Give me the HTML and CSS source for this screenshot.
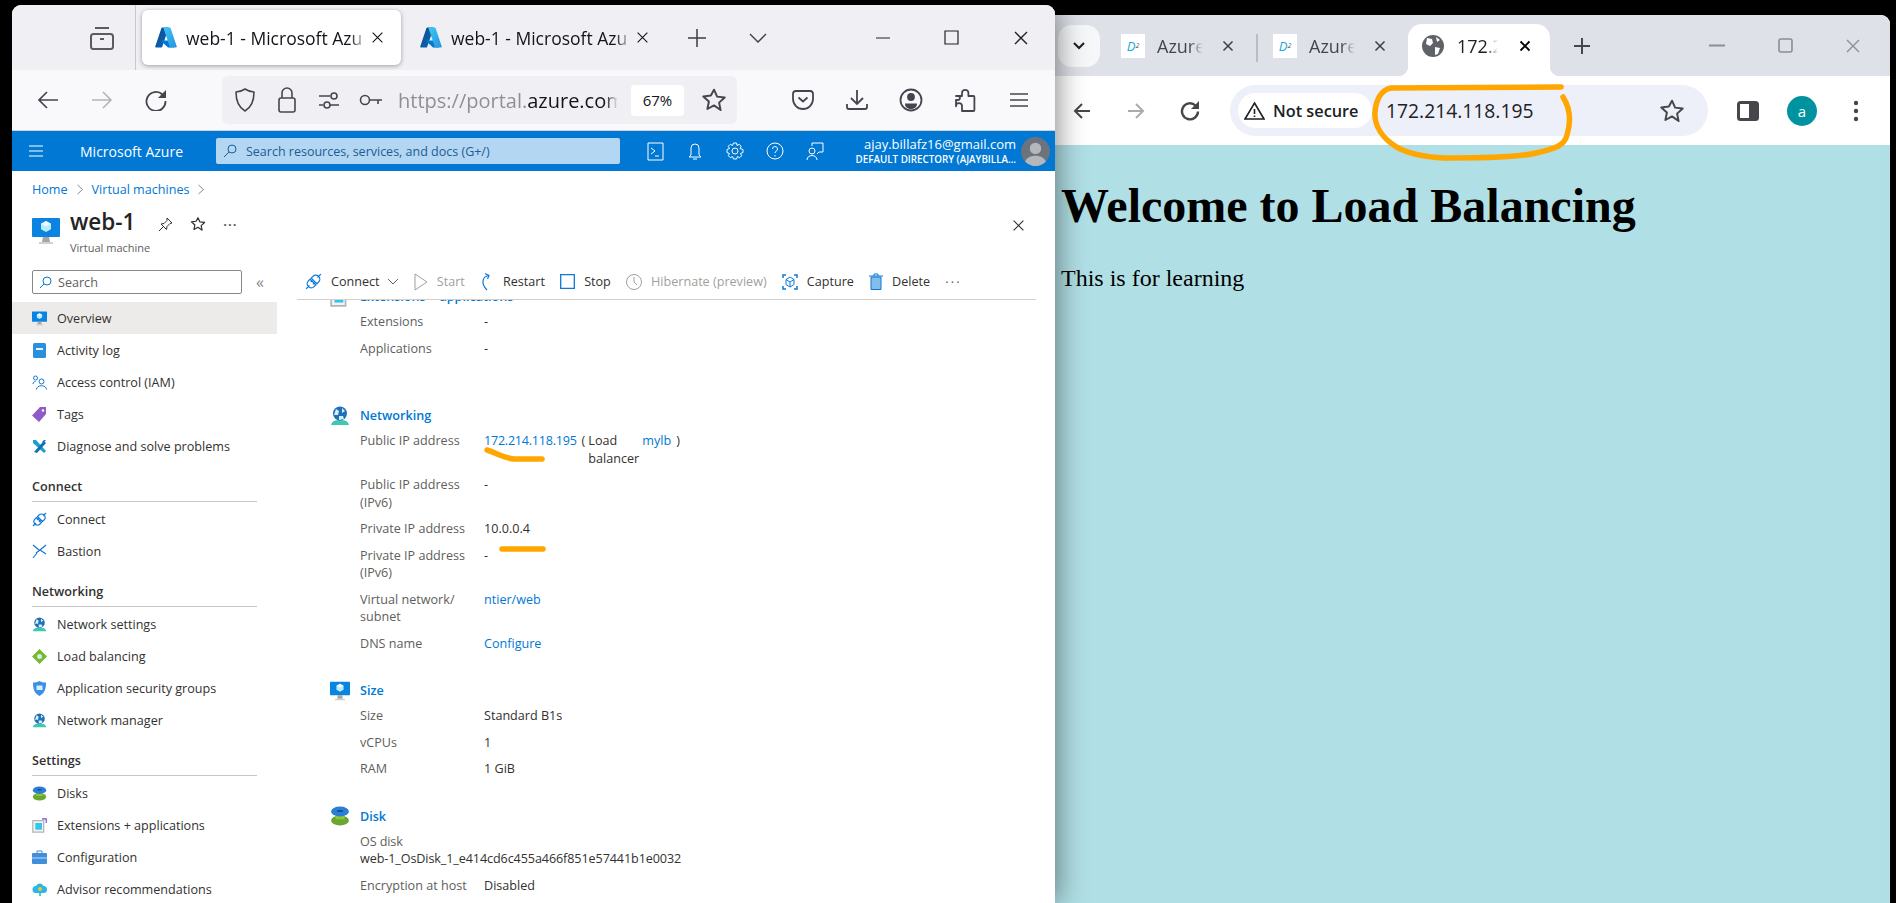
FILE: index.html
```html
<!DOCTYPE html>
<html lang="en">

<head>
    <meta charset="UTF-8">
    <title>web-1 - Microsoft Azure</title>
    <link rel="stylesheet" href="styles.css">
</head>

<body>

    <!-- shared icons -->
    <svg class="defs" width="0" height="0">
        <defs>
            <linearGradient id="azA" x1="0" y1="0" x2="1" y2="1">
                <stop offset="0" stop-color="#114a8b"/>
                <stop offset="1" stop-color="#0669bc"/>
            </linearGradient>
            <linearGradient id="azB" x1="0" y1="0" x2="1" y2="1">
                <stop offset="0" stop-color="#3ccbf4"/>
                <stop offset="1" stop-color="#2892df"/>
            </linearGradient>
        </defs>
        <symbol id="azure" viewBox="3 5 90 86">
            <path d="M33.34 6.54h26.04l-27.03 80.1a4.15 4.15 0 0 1-3.94 2.81H8.15a4.14 4.14 0 0 1-3.93-5.47L29.4 9.38a4.15 4.15 0 0 1 3.94-2.83z" fill="url(#azA)"/>
            <path d="M71.17 60.26H29.88a1.91 1.91 0 0 0-1.3 3.31l26.53 24.76a4.17 4.17 0 0 0 2.85 1.12h23.38z" fill="#0078d4"/>
            <path d="M66.6 9.36a4.14 4.14 0 0 0-3.93-2.82H33.65a4.15 4.15 0 0 1 3.93 2.82l25.18 74.62a4.15 4.15 0 0 1-3.93 5.48h29.02a4.15 4.15 0 0 0 3.93-5.48z" fill="url(#azB)"/>
        </symbol>
        <symbol id="x" viewBox="0 0 16 16">
            <path d="M2 2l12 12M14 2L2 14" fill="none" stroke="currentColor" stroke-width="1.4"/>
        </symbol>
        <symbol id="star" viewBox="0 0 24 24">
            <path d="M12 2.5l2.9 6.4 7 .8-5.2 4.7 1.4 6.9L12 17l-6.1 3.3 1.4-6.9-5.2-4.7 7-.8z" fill="none" stroke="currentColor" stroke-width="1.8" stroke-linejoin="round"/>
        </symbol>
        <symbol id="vm" viewBox="0 0 28 28">
            <rect x="0" y="1" width="28" height="19" rx="1" fill="#0a84e0"/>
            <path d="M14 4l5 2.800v5.400L14 15l-5-2.800V6.800z" fill="#b5ecf7"/>
            <path d="M14 4l5 2.800L14 9.600 9 6.800z" fill="#e8fafd"/>
            <path d="M11 20h6l1 5h-8z" fill="#a5a5a5"/>
            <path d="M7 25h14v2H7z" fill="#d0d0d0"/>
        </symbol>
        <symbol id="plug" viewBox="0 0 15 15">
            <path d="M1 14l3-3M14 1l-3 3M4.500 5.500l5 5-1.500 1.500a3 3 0 0 1-5-5zM10.500 9.500l-5-5L7 3a3 3 0 0 1 5 5zM5 8l1.500-1.500M7 10l1.500-1.500" fill="none" stroke="#0f78d4" stroke-width="1.100"/>
        </symbol>
        <symbol id="net" viewBox="0 0 20 20">
            <path d="M1 19c1-4 4-5 9-5s8 1 9 5z" fill="#3fc7b0"/>
            <circle cx="10" cy="7.500" r="7" fill="#1f6fb9"/>
            <path d="M6 3l3 2-1 4-4 0zM12 2l3 3-3 2zM9 10l4 0 1 3-5 1z" fill="#d6effa"/>
        </symbol>
        <symbol id="disk" viewBox="0 0 18 18">
            <ellipse cx="9" cy="13" rx="8" ry="4.500" fill="#6aa72f"/>
            <rect x="5" y="7" width="8" height="5" fill="#8cc63f"/>
            <ellipse cx="9" cy="5" rx="8" ry="4.500" fill="#2a7fd5"/>
            <ellipse cx="9" cy="4.500" rx="3" ry="1" fill="#0f4f96"/>
        </symbol>
        <symbol id="ext" viewBox="0 0 18 18">
            <path d="M1 3h13v14H1z" fill="#f3f3f3" stroke="#b4b4b4" stroke-width="1.500"/>
            <path d="M4 6h8v8H4z" fill="#32c5ee"/>
            <path d="M12 1h5v5" fill="none" stroke="#7a3fd0" stroke-width="1.300"/>
        </symbol>
    </svg>

    <section class="win firefox">
        <div class="ff-tabs">
            <span class="ff-btn wide">
                <svg width="24" height="24" viewBox="0 0 24 24" fill="none" stroke="#5b5b66" stroke-width="2"><path d="M5 2h14"/><rect x="1" y="8" width="22" height="15" rx="2.500"/><path d="M10 13h4"/></svg>
            </span>
            <span class="ff-sep"></span>
            <div class="ff-tab active">
                <svg class="tab-logo" width="22" height="21"><use href="#azure"/></svg>
                <span class="ff-tab-title">web-1 - Microsoft Azu</span>
                <svg class="tab-x" width="13" height="13"><use href="#x"/></svg>
            </div>
            <div class="ff-tab">
                <svg class="tab-logo" width="22" height="21"><use href="#azure"/></svg>
                <span class="ff-tab-title">web-1 - Microsoft Azu</span>
                <svg class="tab-x" width="13" height="13"><use href="#x"/></svg>
            </div>
            <span class="ff-btn plus">
                <svg width="20" height="20" viewBox="0 0 20 20" stroke="#3b3b45" stroke-width="1.500"><path d="M10 1v18M1 10h18"/></svg>
            </span>
            <span class="ff-btn chev">
                <svg width="18" height="12" viewBox="0 0 18 12" fill="none" stroke="#3b3b45" stroke-width="1.300"><path d="M1 2l8 8 8-8"/></svg>
            </span>
            <div class="win-ctrl">
                <span><svg width="16" height="16" viewBox="0 0 16 16" stroke="#222" stroke-width="1.200"><path d="M1 8h14"/></svg></span>
                <span><svg width="15" height="15" viewBox="0 0 15 15" fill="none" stroke="#222" stroke-width="1.200"><path d="M1 1h13v13H1z"/></svg></span>
                <span><svg width="16" height="16" viewBox="0 0 16 16"><use href="#x"/></svg></span>
            </div>
        </div>

        <div class="ff-nav">
            <span class="ff-btn"><svg width="22" height="22" viewBox="0 0 22 22" fill="none" stroke="#45454f" stroke-width="1.700"><path d="M21 11H2M10 3l-8 8 8 8"/></svg></span>
            <span class="ff-btn"><svg width="22" height="22" viewBox="0 0 22 22" fill="none" stroke="#b4b4b9" stroke-width="1.700"><path d="M1 11h19M12 3l8 8-8 8"/></svg></span>
            <span class="ff-btn"><svg width="22" height="22" viewBox="0 0 22 22"><path d="M17.500 5.500A9.500 9.500 0 1 0 20.500 12" fill="none" stroke="#45454f" stroke-width="1.800"/><path d="M21 1v8h-8z" fill="#45454f"/></svg></span>
            <div class="ff-url">
                <span class="url-icon"><svg width="22" height="24" viewBox="0 0 22 24" fill="none" stroke="#45454f" stroke-width="1.600"><path d="M11 1c3 2 6 3 9 3 0 9-2 15-9 19C4 19 2 13 2 4c3 0 6-1 9-3z" stroke-linejoin="round"/></svg></span>
                <span class="url-icon"><svg width="20" height="26" viewBox="0 0 20 26" fill="none" stroke="#45454f" stroke-width="1.600"><rect x="2" y="11" width="16" height="14" rx="2"/><path d="M5 11V6a5 5 0 0 1 10 0v5"/></svg></span>
                <span class="url-icon"><svg width="22" height="20" viewBox="0 0 22 20" fill="none" stroke="#45454f" stroke-width="1.600"><path d="M1 6h11M1 15h4"/><circle cx="16" cy="6" r="3"/><circle cx="9" cy="15" r="3"/><path d="M12 15h9"/></svg></span>
                <span class="url-icon"><svg width="24" height="14" viewBox="0 0 24 14" fill="none" stroke="#45454f" stroke-width="1.600"><circle cx="6" cy="7" r="4.500"/><path d="M11 7h12M19 7v4"/></svg></span>
                <span class="url-text">https://portal.<b>azure.com/</b></span>
                <span class="url-zoom">67%</span>
                <span class="url-star"><svg width="26" height="26"><use href="#star"/></svg></span>
            </div>
            <div class="ff-tools">
                <span class="ff-btn"><svg width="22" height="20" viewBox="0 0 22 20" fill="none" stroke="#45454f" stroke-width="1.800"><path d="M4 1h14a3 3 0 0 1 3 3v5a10 10 0 0 1-20 0V4a3 3 0 0 1 3-3z"/><path d="M6.500 7.500l4.500 4 4.500-4"/></svg></span>
                <span class="ff-btn"><svg width="22" height="20" viewBox="0 0 22 20" fill="none" stroke="#45454f" stroke-width="1.800"><path d="M11 0v13M5 8l6 6 6-6M1 14v3a2 2 0 0 0 2 2h16a2 2 0 0 0 2-2v-3"/></svg></span>
                <span class="ff-btn"><svg width="24" height="24" viewBox="0 0 24 24" fill="none" stroke="#45454f" stroke-width="1.800"><circle cx="12" cy="12" r="10.500"/><circle cx="12" cy="9" r="3" fill="#45454f"/><path d="M6 15.500h12c0 4-3 5.500-6 5.500s-6-1.500-6-5.500z" fill="#45454f" stroke="none"/></svg></span>
                <span class="ff-btn"><svg width="22" height="24" viewBox="0 0 22 24" fill="none" stroke="#45454f" stroke-width="1.800"><path d="M2 8h6V5a3.200 3.200 0 0 1 6.400 0v3h5a1 1 0 0 1 1 1v13a1 1 0 0 1-1 1H8v-5a2.500 2.500 0 0 0-6 .300V12h2a2 2 0 0 0 0-4z" stroke-linejoin="round"/></svg></span>
                <span class="ff-btn"><svg width="20" height="16" viewBox="0 0 20 16" stroke="#45454f" stroke-width="1.700"><path d="M1 2h18M1 8h18M1 14h18"/></svg></span>
            </div>
        </div>

        <div class="az-bar">
            <span class="az-burger"><svg width="16" height="14" viewBox="0 0 16 14" stroke="#a9d3f2" stroke-width="1.600"><path d="M1 2h14M1 7h14M1 12h14"/></svg></span>
            <span class="az-brand">Microsoft Azure</span>
            <div class="az-search">
                <svg width="14" height="14" viewBox="0 0 14 14" fill="none" stroke="#1d5c94"><circle cx="9" cy="5" r="4"/><path d="M6 8l-5 5"/></svg>
                <span>Search resources, services, and docs (G+/)</span>
            </div>
            <div class="az-icons">
                <span><svg width="17" height="19" viewBox="0 0 17 19" fill="none" stroke="#fff"><path d="M1 1h15v17H1z"/><path d="M4 6l4 3-4 3M8 14h4"/></svg></span>
                <span><svg width="14" height="19" viewBox="0 0 14 19" fill="none" stroke="#fff"><path d="M3 13V6a4 4 0 0 1 8 0v7l2 2H1zM5 17h4"/></svg></span>
                <span><svg width="18" height="18" viewBox="0 0 18 18" fill="none" stroke="#fff"><circle cx="9" cy="9" r="3"/><path d="M7.500 1h3l.5 2.500 2.200-1.200 2 2-1.200 2.200L17 7.500v3l-2.500 1 1.200 2.200-2 2-2.200-1.200-1 2.500h-3l-1-2.500-2.200 1.200-2-2 1.200-2.200-2.500-1v-3l2.500-1-1.200-2.200 2-2 2.200 1.200z"/></svg></span>
                <span><svg width="18" height="18" viewBox="0 0 18 18" fill="none" stroke="#fff"><circle cx="9" cy="9" r="8"/><path d="M6.500 7a2.500 2.500 0 1 1 3.500 2.300c-.7.400-1 .8-1 1.700M9 13v1.500"/></svg></span>
                <span><svg width="18" height="19" viewBox="0 0 18 19" fill="none" stroke="#fff"><path d="M6 4V1h11v9h-4l-2 2"/><circle cx="6" cy="9" r="3"/><path d="M1 18c0-6 10-6 10 0"/></svg></span>
            </div>
            <div class="az-user">
                <span class="az-mail">ajay.billafz16@gmail.com</span>
                <span class="az-dir">DEFAULT DIRECTORY (AJAYBILLA...</span>
            </div>
            <span class="az-avatar">
                <svg width="29" height="29" viewBox="0 0 28 28"><circle cx="14" cy="14" r="14" fill="#6b737d"/><circle cx="14" cy="11" r="5.500" fill="#b4b8bc"/><path d="M4 24c2-8 18-8 20 0a14 14 0 0 1-20 0z" fill="#b4b8bc"/></svg>
            </span>
        </div>

        <div class="az-page">
            <div class="crumbs">
                <a>Home</a>
                <svg width="8" height="11" viewBox="0 0 8 11" fill="none" stroke="#8a8886"><path d="M1.500 1l5 4.500-5 4.500"/></svg>
                <a>Virtual machines</a>
                <svg width="8" height="11" viewBox="0 0 8 11" fill="none" stroke="#8a8886"><path d="M1.500 1l5 4.500-5 4.500"/></svg>
            </div>

            <div class="res-head">
                <svg class="res-icon" width="28" height="28"><use href="#vm"/></svg>
                <div class="res-name">
                    <h1>web-1</h1>
                    <span>Virtual machine</span>
                </div>
                <div class="res-actions">
                    <svg width="15" height="15" viewBox="0 0 15 15" fill="none" stroke="#323130"><path d="M9 1l5 5-2 .5-3 3-.5 3L3 7l3-.5 3-3zM5 10l-4 4"/></svg>
                    <svg class="res-star" width="16" height="16"><use href="#star"/></svg>
                    <span class="dots">···</span>
                </div>
                <svg class="res-close" width="13" height="13"><use href="#x"/></svg>
            </div>

            <div class="az-body">
                <aside class="side">
                    <div class="side-search">
                        <div class="side-input">
                            <svg width="13" height="13" viewBox="0 0 13 13" fill="none" stroke="#0078d4"><circle cx="8" cy="5" r="4"/><path d="M5 8l-4 4"/></svg>
                            <span>Search</span>
                        </div>
                        <span class="collapse">«</span>
                    </div>

                    <a class="item selected"><svg width="15" height="15"><use href="#vm"/></svg>Overview</a>
                    <a class="item"><svg width="15" height="15" viewBox="0 0 15 15"><rect x="1" y="0" width="13" height="15" rx="1.500" fill="#2b8fdc"/><rect x="4" y="5" width="7" height="2" fill="#e6f3fc"/></svg>Activity log</a>
                    <a class="item"><svg width="15" height="15" viewBox="0 0 15 15" fill="none" stroke="#0f78d4"><circle cx="3.500" cy="3" r="2"/><circle cx="9.500" cy="6.500" r="2.500"/><path d="M1 9c0-1.500 1-2.500 2.500-2.500M4.500 14.500c0-5 10-5 10 0"/></svg>Access control (IAM)</a>
                    <a class="item"><svg width="15" height="15" viewBox="0 0 15 15"><path d="M8 0h6v7l-7 8-7-6.500z" fill="#8f5bc9"/><circle cx="11" cy="3.500" r="1.200" fill="#fff"/></svg>Tags</a>
                    <a class="item"><svg width="15" height="15" viewBox="0 0 15 15"><path d="M1 1l3 0 10 11-2 2L1 4z" fill="#1aa0c9"/><path d="M14 1l-3 3-1-1 2-2zM9 5l3-3 2 2-9 10-3-1z" fill="#0f6fb8"/></svg>Diagnose and solve problems</a>

                    <h2 class="side-title">Connect</h2>
                    <a class="item"><svg width="15" height="15"><use href="#plug"/></svg>Connect</a>
                    <a class="item"><svg width="15" height="15" viewBox="0 0 15 15" fill="none" stroke="#0f78d4" stroke-width="1.200"><path d="M1 1l6 5M5 9l-4 5M14 1L8 6l6 4M4 9l4-3"/></svg>Bastion</a>

                    <h2 class="side-title">Networking</h2>
                    <a class="item"><svg width="15" height="15"><use href="#net"/></svg>Network settings</a>
                    <a class="item"><svg width="15" height="15" viewBox="0 0 15 15"><path d="M7.500 0L15 7.500 7.500 15 0 7.500z" fill="#7ab829"/><circle cx="7.500" cy="7.500" r="2.500" fill="#cfe9fb"/></svg>Load balancing</a>
                    <a class="item"><svg width="15" height="15" viewBox="0 0 15 15"><path d="M7.500 0c2 1 4 1.500 6.500 1.500 0 6-1 10.500-6.500 13.500C2 12 1 7.500 1 1.500 3.500 1.500 5.500 1 7.500 0z" fill="#3a90e5"/><rect x="4.500" y="4.500" width="6" height="4.500" fill="#d6ecfb"/></svg>Application security groups</a>
                    <a class="item"><svg width="15" height="15"><use href="#net"/></svg>Network manager</a>

                    <h2 class="side-title">Settings</h2>
                    <a class="item"><svg width="15" height="15"><use href="#disk"/></svg>Disks</a>
                    <a class="item"><svg width="15" height="15"><use href="#ext"/></svg>Extensions + applications</a>
                    <a class="item"><svg width="15" height="15" viewBox="0 0 15 15"><rect x="0" y="3" width="15" height="11" rx="1" fill="#3f8fdc"/><path d="M5 3V1h5v2" fill="none" stroke="#3f8fdc"/><path d="M0 8h15" stroke="#bcdcf5"/></svg>Configuration</a>
                    <a class="item"><svg width="15" height="15" viewBox="0 0 15 15"><path d="M4 11a3.500 3.500 0 0 1 0-7 4 4 0 0 1 7.500 0 3.500 3.500 0 0 1 0 7z" fill="#29b6e8"/><circle cx="8" cy="7" r="2" fill="#f4c430"/><path d="M7 11h2v3H7z" fill="#4fd0c0"/></svg>Advisor recommendations</a>
                </aside>

                <main class="main">
                    <div class="cmds">
                        <span class="cmd"><svg width="17" height="17"><use href="#plug"/></svg>Connect<svg class="cmd-chev" width="12" height="7" viewBox="0 0 12 7" fill="none" stroke="#605e5c"><path d="M1 1l5 5 5-5"/></svg></span>
                        <span class="cmd off"><svg width="14" height="18" viewBox="0 0 14 18" fill="none" stroke="#a19f9d"><path d="M1 1l12 8-12 8z"/></svg>Start</span>
                        <span class="cmd"><svg width="14" height="18" viewBox="0 0 14 18" fill="none" stroke="#0f78d4" stroke-width="1.200"><path d="M9 2.500C3 3 0 10 7 17"/><path d="M5 .5l4 2-1.500 3.500"/></svg>Restart</span>
                        <span class="cmd"><svg width="15" height="15" viewBox="0 0 15 15" fill="none" stroke="#0f78d4" stroke-width="1.300"><path d="M.7.7h13.600v13.600H.7z"/></svg>Stop</span>
                        <span class="cmd off"><svg width="16" height="16" viewBox="0 0 16 16" fill="none" stroke="#a19f9d"><circle cx="8" cy="8" r="7.500"/><path d="M8 3v5l3 3"/></svg>Hibernate (preview)</span>
                        <span class="cmd"><svg width="16" height="16" viewBox="0 0 16 16" fill="none" stroke="#0f78d4"><path d="M1 4V1h3M12 1h3v3M15 12v3h-3M4 15H1v-3" stroke-width="1.500"/><path d="M8 3l4 2.500v5L8 13l-4-2.500v-5zM4 5.500L8 8l4-2.500M8 8v5"/></svg>Capture</span>
                        <span class="cmd"><svg width="14" height="17" viewBox="0 0 14 17"><path d="M2 4h10v12.500H2z" fill="#83bdec" stroke="#0f78d4"/><path d="M0 3h14M5 3V1h4v2" fill="none" stroke="#0f78d4"/></svg>Delete</span>
                        <span class="dots thin">···</span>
                    </div>

                    <div class="scroll">
                        <section class="group clipped">
                            <h3><svg width="20" height="20"><use href="#ext"/></svg><a>Extensions + applications</a></h3>
                            <dl class="props">
                                <dt>Extensions</dt><dd>-</dd>
                                <dt>Applications</dt><dd>-</dd>
                            </dl>
                        </section>

                        <section class="group far">
                            <h3><svg width="20" height="20"><use href="#net"/></svg><a>Networking</a></h3>
                            <dl class="props">
                                <dt>Public IP address</dt>
                                <dd class="ip-row"><a class="ip">172.214.118.195</a><span class="paren">(</span><span class="lb">Load balancer</span><a>mylb</a><span class="paren">)</span></dd>
                                <dt>Public IP address (IPv6)</dt><dd>-</dd>
                                <dt>Private IP address</dt><dd>10.0.0.4</dd>
                                <dt>Private IP address (IPv6)</dt><dd>-</dd>
                                <dt>Virtual network/ subnet</dt><dd><a>ntier/web</a></dd>
                                <dt>DNS name</dt><dd><a>Configure</a></dd>
                            </dl>
                        </section>

                        <section class="group">
                            <h3><svg width="20" height="20"><use href="#vm"/></svg><a>Size</a></h3>
                            <dl class="props">
                                <dt>Size</dt><dd>Standard B1s</dd>
                                <dt>vCPUs</dt><dd>1</dd>
                                <dt>RAM</dt><dd>1 GiB</dd>
                            </dl>
                        </section>

                        <section class="group">
                            <h3><svg width="20" height="20"><use href="#disk"/></svg><a>Disk</a></h3>
                            <dl class="props">
                                <div class="stacked">
                                    <dt>OS disk</dt>
                                    <dd>web-1_OsDisk_1_e414cd6c455a466f851e57441b1e0032</dd>
                                </div>
                                <dt>Encryption at host</dt><dd>Disabled</dd>
                            </dl>
                        </section>
                    </div>
                </main>
            </div>
        </div>
    </section>

    <section class="win chrome">
        <div class="cr-tabs">
            <span class="cr-drop">
                <svg width="14" height="10" viewBox="0 0 14 10" fill="none" stroke="#202124" stroke-width="2.200"><path d="M2 2l5 5 5-5"/></svg>
            </span>
            <div class="cr-tab">
                <span class="d2">D<sup>2</sup></span>
                <span class="cr-title">Azure</span>
                <svg class="cr-x" width="12" height="12" viewBox="0 0 16 16"><path d="M2 2l12 12M14 2L2 14" stroke="#3c4043" stroke-width="2"/></svg>
            </div>
            <span class="cr-sep"></span>
            <div class="cr-tab second">
                <span class="d2">D<sup>2</sup></span>
                <span class="cr-title">Azure</span>
                <svg class="cr-x" width="12" height="12" viewBox="0 0 16 16"><path d="M2 2l12 12M14 2L2 14" stroke="#3c4043" stroke-width="2"/></svg>
            </div>
            <div class="cr-tab active">
                <svg class="globe" width="22" height="22" viewBox="0 0 22 22"><circle cx="11" cy="11" r="11" fill="#5f6368"/><path d="M5 3l5 1 1 4-3 3-4-2zM13 12l5 1-2 6-3 1zM14 2l4 3-3 2z" fill="#fff"/></svg>
                <span class="cr-title">172.2</span>
                <svg class="cr-x" width="12" height="12" viewBox="0 0 16 16"><path d="M2 2l12 12M14 2L2 14" stroke="#000" stroke-width="2.400"/></svg>
            </div>
            <span class="cr-plus"><svg width="16" height="16" viewBox="0 0 16 16" stroke="#45474a" stroke-width="2"><path d="M8 0v16M0 8h16"/></svg></span>
            <div class="cr-ctrl">
                <span><svg width="16" height="3" viewBox="0 0 16 3" stroke="#8b8e92" stroke-width="2"><path d="M0 1.500h16"/></svg></span>
                <span><svg width="15" height="15" viewBox="0 0 15 15" fill="none" stroke="#8b8e92" stroke-width="1.600"><rect x="1" y="1" width="13" height="13" rx="2"/></svg></span>
                <span class="cr-close"><svg width="16" height="16"><use href="#x"/></svg></span>
            </div>
        </div>

        <div class="cr-nav">
            <span class="cr-btn"><svg width="18" height="18" viewBox="0 0 18 18" fill="none" stroke="#45474a" stroke-width="2"><path d="M17 9H2M9 2L2 9l7 7"/></svg></span>
            <span class="cr-btn"><svg width="18" height="18" viewBox="0 0 18 18" fill="none" stroke="#a9abae" stroke-width="2"><path d="M1 9h15M9 2l7 7-7 7"/></svg></span>
            <span class="cr-btn"><svg width="20" height="20" viewBox="0 0 20 20"><path d="M15.500 4.500a8 8 0 1 0 2.500 6" fill="none" stroke="#45474a" stroke-width="2.400"/><path d="M19 0v8h-8z" fill="#45474a"/></svg></span>
            <div class="omni">
                <span class="chip">
                    <svg width="21" height="19" viewBox="0 0 21 19" fill="none" stroke="#202124" stroke-width="1.600"><path d="M10.500 2L20 18H1z"/><path d="M10.500 8v5M10.500 14.500v1.500"/></svg>
                    Not secure
                </span>
                <span class="omni-text">172.214.118.195</span>
                <span class="omni-star"><svg width="26" height="26"><use href="#star"/></svg></span>
            </div>
            <span class="cr-btn panel"><svg width="22" height="20" viewBox="0 0 22 20"><rect x="1.500" y="1.500" width="19" height="17" rx="2" fill="#fff" stroke="#45474a" stroke-width="3"/><path d="M12 1h9v18h-9z" fill="#45474a"/></svg></span>
            <span class="cr-avatar">a</span>
            <span class="cr-btn more"><svg width="6" height="22" viewBox="0 0 6 22" fill="#45474a"><circle cx="3" cy="3" r="2.200"/><circle cx="3" cy="11" r="2.200"/><circle cx="3" cy="19" r="2.200"/></svg></span>
        </div>

        <div class="site">
            <h1>Welcome to Load Balancing</h1>
            <p>This is for learning</p>
        </div>
    </section>

    <!-- the pen marks drawn over the screenshot -->
    <svg class="ink" width="1896" height="903" viewBox="0 0 1896 903" fill="none" stroke="#ffa600" stroke-linecap="round" stroke-width="5.5">
        <path d="M487 450c10 3 16 8 27 9h28"/>
        <path d="M502 549h41"/>
        <path d="M1561 87c-50 0-120 1-170 1-10 2-15 12-16 24-1 14 8 26 20 34 12 8 30 11 50 12C1475 158 1515 158 1536 153 1555 149 1565 145 1567 135 1571 122 1570 108 1563 97"/>
    </svg>

</body>

</html>
```

FILE: styles.css
```css
body {
    margin: 0;
    width: 1896px;
    height: 903px;
    overflow: hidden;
    background: #000;
    font-family: "Open Sans", "Noto Sans", sans-serif;
    position: relative;
}

.defs {
    position: absolute;
}

.ink {
    position: absolute;
    left: 0;
    top: 0;
    z-index: 5;
    pointer-events: none;
}

.win {
    position: absolute;
    overflow: hidden;
    display: flex;
    flex-direction: column;
}

/* firefox window */
.firefox {
    left: 12px;
    top: 5px;
    width: 1043px;
    height: 898px;
    border-radius: 9px 9px 0 0;
    background: #fff;
    box-shadow: 1px 0 30px rgba(0, 0, 0, 0.5);
    z-index: 2;
}

.ff-tabs {
    height: 65px;
    flex: none;
    display: flex;
    align-items: center;
    padding-left: 66px;
    background: #f0f0f4;
}

.ff-btn {
    width: 54px;
    height: 48px;
    flex: none;
    display: flex;
    align-items: center;
    justify-content: center;
}

.ff-btn.wide {
    width: 48px;
}

.ff-btn.plus {
    width: 62px;
}

.ff-btn.chev {
    width: 60px;
}

.ff-sep {
    width: 1px;
    height: 65px;
    margin-left: 9px;
    background: #c8c8cc;
}

.ff-tab {
    width: 259px;
    height: 55px;
    margin-left: 6px;
    padding: 0 13px;
    box-sizing: border-box;
    display: flex;
    align-items: center;
    border-radius: 6px;
    color: #15141a;
    flex: none;
}

.ff-tab.active {
    background: #fff;
    box-shadow: 0 1px 4px rgba(0, 0, 0, 0.35);
}

.tab-logo {
    flex: none;
}

.ff-tab-title {
    margin-left: 9px;
    width: 182px;
    flex: none;
    overflow: hidden;
    white-space: nowrap;
    font-size: 17.5px;
    -webkit-mask-image: linear-gradient(to right, #000 90%, transparent);
    mask-image: linear-gradient(to right, #000 90%, transparent);
}

.tab-x {
    margin-left: 3px;
    flex: none;
}

.win-ctrl,
.cr-ctrl {
    display: flex;
    margin-left: auto;
    color: #222;
}

.win-ctrl span {
    width: 69px;
    height: 48px;
    display: flex;
    align-items: center;
    justify-content: center;
}

.ff-nav {
    height: 60px;
    flex: none;
    display: flex;
    align-items: center;
    padding-left: 9px;
    background: #f9f9fb;
    border-bottom: 1px solid #cfcfd8;
}

.ff-url {
    width: 515px;
    height: 48px;
    margin-left: 39px;
    padding-left: 2px;
    box-sizing: border-box;
    flex: none;
    display: flex;
    align-items: center;
    border-radius: 6px;
    background: #f0f0f4;
    color: #45454f;
}

.url-icon {
    width: 42px;
    flex: none;
    display: flex;
    justify-content: center;
}

.url-text {
    width: 220px;
    margin-left: 6px;
    flex: none;
    overflow: hidden;
    white-space: nowrap;
    font-size: 20px;
    color: #8f8f96;
    -webkit-mask-image: linear-gradient(to right, #000 94%, transparent);
    mask-image: linear-gradient(to right, #000 94%, transparent);
}

.url-text b {
    font-weight: 400;
    color: #15141a;
}

.url-zoom {
    width: 53px;
    height: 31px;
    margin-left: 13px;
    flex: none;
    display: flex;
    align-items: center;
    justify-content: center;
    border-radius: 4px;
    background: #fff;
    color: #15141a;
    font-size: 15px;
}

.url-star {
    margin-left: 17px;
    display: flex;
}

.ff-tools {
    display: flex;
    margin-left: 39px;
}

/* azure top bar */
.az-bar {
    height: 40px;
    flex: none;
    display: flex;
    align-items: center;
    background: #0078d4;
    color: #fff;
}

.az-burger {
    width: 48px;
    flex: none;
    display: flex;
    justify-content: center;
}

.az-brand {
    width: 136px;
    margin-left: 20px;
    flex: none;
    font-size: 14px;
    white-space: nowrap;
}

.az-search {
    width: 404px;
    height: 26px;
    padding-left: 7px;
    box-sizing: border-box;
    flex: none;
    display: flex;
    align-items: center;
    gap: 9px;
    border-radius: 2px;
    background: #b3d6f2;
    color: #1d5c94;
    font-size: 12.5px;
}

.az-icons {
    margin-left: 15px;
    display: flex;
}

.az-icons span {
    width: 40px;
    display: flex;
    justify-content: center;
}

.az-user {
    margin-left: auto;
    display: flex;
    flex-direction: column;
    align-items: flex-end;
    white-space: nowrap;
}

.az-mail {
    font-size: 13px;
    line-height: 17px;
}

.az-dir {
    font-size: 9.8px;
    line-height: 13px;
    font-weight: 600;
}

.az-avatar {
    margin: 0 5px 0 5px;
    display: flex;
}

/* azure page */
.az-page {
    flex: 1;
    min-height: 0;
    display: flex;
    flex-direction: column;
    color: #323130;
    font-size: 12.6px;
}

.crumbs {
    height: 17px;
    flex: none;
    margin-top: 10px;
    padding-left: 20px;
    display: flex;
    align-items: center;
    gap: 8px;
    line-height: 17px;
}

.crumbs a {
    color: #0078d4;
}

.res-head {
    height: 65px;
    flex: none;
    padding-left: 20px;
    display: flex;
    position: relative;
}

.res-icon {
    margin-top: 19px;
    flex: none;
}

.res-name {
    margin-left: 10px;
    margin-top: 9px;
}

.res-name h1 {
    margin: 0;
    font-size: 22.5px;
    line-height: 30px;
    font-weight: 600;
    color: #242424;
}

.res-name span {
    display: block;
    margin-top: 3px;
    font-size: 11px;
    line-height: 15px;
    color: #605e5c;
}

.res-actions {
    margin-left: 8px;
    margin-top: 17px;
    height: 18px;
    display: flex;
    align-items: center;
    gap: 17px;
}

.res-star {
    color: #323130;
}

.dots {
    font-weight: 700;
    font-size: 13px;
    letter-spacing: 1px;
    color: #605e5c;
}

.dots.thin {
    font-weight: 400;
    letter-spacing: 2px;
}

.res-close {
    position: absolute;
    right: 30px;
    top: 21px;
    color: #323130;
}

.az-body {
    flex: 1;
    min-height: 0;
    display: flex;
}

.side {
    width: 265px;
    flex: none;
}

.side-search {
    height: 24px;
    margin: 7px 0 8px 20px;
    display: flex;
    align-items: center;
}

.side-input {
    width: 210px;
    height: 24px;
    padding-left: 6px;
    box-sizing: border-box;
    display: flex;
    align-items: center;
    gap: 6px;
    border: 1px solid #8a8886;
    border-radius: 2px;
    color: #605e5c;
}

.collapse {
    margin-left: 14px;
    font-size: 16px;
    color: #8a8886;
}

.item {
    height: 32px;
    padding-left: 20px;
    display: flex;
    align-items: center;
    gap: 10px;
}

.item svg {
    flex: none;
}

.item.selected {
    background: #edebe9;
}

.side-title {
    width: 225px;
    margin: 0 0 1px 20px;
    padding: 16px 0 6px;
    border-bottom: 1px solid #c8c6c4;
    font-size: 12.6px;
    line-height: 17px;
    font-weight: 600;
    color: #323130;
}

.main {
    width: 739px;
    margin-left: 20px;
    flex: none;
    display: flex;
    flex-direction: column;
    min-height: 0;
}

.cmds {
    height: 37px;
    flex: none;
    padding: 1px 0 0 8px;
    box-sizing: border-box;
    display: flex;
    align-items: center;
    position: relative;
    z-index: 1;
    background: #fff;
    border-bottom: 1px solid #d2d0ce;
}

.cmd {
    display: flex;
    align-items: center;
    gap: 9px;
    margin-right: 15.2px;
    white-space: nowrap;
}

.cmd.off {
    color: #a19f9d;
}

.cmd-chev {
    margin-left: -2px;
}

.scroll {
    flex: 1;
    min-height: 0;
    overflow: hidden;
    margin-top: -12px;
}

.group {
    margin-top: 30px;
    padding-left: 33px;
}

.group.clipped {
    margin-top: 0;
}

.group.far {
    margin-top: 50px;
}

.group h3 {
    margin: 0 0 8px;
    height: 17px;
    display: flex;
    align-items: center;
    gap: 10px;
    font-size: 12.6px;
    font-weight: 600;
}

.group a {
    color: #0078d4;
}

.props {
    margin: 0;
    display: grid;
    grid-template-columns: 124px 1fr;
    row-gap: 9px;
    padding-left: 30px;
    line-height: 17.5px;
}

.props dt {
    color: #605e5c;
    padding-right: 14px;
}

.props dd {
    margin: 0;
    color: #323130;
}

.stacked {
    grid-column: 1 / 3;
    letter-spacing: -0.1px;
}

.ip-row {
    display: flex;
    align-items: flex-start;
}

.ip {
    letter-spacing: -0.25px;
}

.paren {
    margin: 0 3px 0 5px;
}

.lb {
    width: 54px;
}

/* chrome window */
.chrome {
    left: 1055px;
    top: 15px;
    width: 835px;
    height: 888px;
    border-radius: 0 9px 0 0;
    background: #fff;
    z-index: 1;
}

.cr-tabs {
    height: 61px;
    flex: none;
    display: flex;
    align-items: flex-end;
    background: #dee2e8;
    position: relative;
}

.cr-drop {
    width: 42px;
    height: 42px;
    margin: 0 0 9px 3px;
    flex: none;
    display: flex;
    align-items: center;
    justify-content: center;
    border-radius: 14px;
    background: #f6f7f9;
}

.cr-tab {
    width: 156px;
    height: 52px;
    flex: none;
    padding-left: 21px;
    padding-bottom: 9px;
    box-sizing: border-box;
    display: flex;
    align-items: center;
    color: #45474a;
}

.cr-tab.second {
    width: 145px;
    padding-left: 15px;
}

.cr-sep {
    width: 2px;
    height: 28px;
    margin: 0 0 14px;
    background: #b9bcc0;
}

.d2 {
    width: 24px;
    height: 24px;
    flex: none;
    display: flex;
    align-items: center;
    justify-content: center;
    background: #fff;
    color: #1aa7e0;
    font-size: 13px;
    font-style: italic;
}

.d2 sup {
    font-size: 7px;
    color: #555;
}

.cr-title {
    width: 46px;
    margin-left: 12px;
    flex: none;
    overflow: hidden;
    white-space: nowrap;
    font-size: 18px;
    -webkit-mask-image: linear-gradient(to right, #000 70%, transparent);
    mask-image: linear-gradient(to right, #000 70%, transparent);
}

.cr-x {
    margin-left: 19px;
    flex: none;
}

.cr-tab.active {
    width: 142px;
    margin-left: 5px;
    padding-left: 14px;
    background: #fff;
    border-radius: 14px 14px 0 0;
    color: #202124;
    position: relative;
}

.cr-tab.active .cr-title {
    width: 41px;
    margin-left: 13px;
}

.cr-tab.active .cr-x {
    margin-left: 21px;
}

.cr-tab.active::before,
.cr-tab.active::after {
    content: "";
    position: absolute;
    bottom: 0;
    width: 10px;
    height: 10px;
    background: radial-gradient(circle at 0 0, transparent 10px, #fff 10.5px);
}

.cr-tab.active::before {
    left: -10px;
}

.cr-tab.active::after {
    right: -10px;
    transform: scaleX(-1);
}

.globe {
    flex: none;
}

.cr-plus {
    margin: 0 0 9px 24px;
    height: 42px;
    display: flex;
    align-items: center;
}

.cr-ctrl {
    align-self: center;
    margin-right: 3px;
}

.cr-ctrl span {
    width: 68px;
    height: 40px;
    display: flex;
    align-items: center;
    justify-content: center;
}

.cr-ctrl .cr-close {
    color: #8b8e92;
}

.cr-nav {
    height: 69px;
    flex: none;
    display: flex;
    align-items: center;
    background: #fff;
}

.cr-btn {
    width: 54px;
    height: 40px;
    flex: none;
    display: flex;
    align-items: center;
    justify-content: center;
}

.omni {
    width: 478px;
    height: 51px;
    margin-left: 13px;
    padding-left: 8px;
    box-sizing: border-box;
    flex: none;
    display: flex;
    align-items: center;
    border-radius: 26px;
    background: #edf0f8;
}

.chip {
    width: 134px;
    height: 35px;
    padding-left: 6px;
    box-sizing: border-box;
    flex: none;
    display: flex;
    align-items: center;
    gap: 8px;
    border-radius: 18px;
    background: #fff;
    color: #202124;
    font-size: 16.3px;
    font-weight: 600;
    white-space: nowrap;
}

.omni-text {
    margin-left: 14px;
    width: 270px;
    flex: none;
    color: #202124;
    font-size: 19.3px;
}

.omni-star {
    display: flex;
    margin-left: 3px;
    color: #45474a;
}

.panel {
    margin-left: 13px;
}

.cr-avatar {
    width: 30px;
    height: 30px;
    margin-left: 12px;
    flex: none;
    display: flex;
    align-items: center;
    justify-content: center;
    border-radius: 50%;
    background: #00939f;
    color: #fff;
    font-size: 15px;
}

.cr-btn.more {
    margin-left: 12px;
}

.site {
    flex: 1;
    padding: 0 6px;
    background: #b0dfe5;
    color: #000;
    font-family: "Liberation Serif", serif;
}

.site h1 {
    margin: 33px 0 0;
    font-size: 48px;
    line-height: 55px;
    font-weight: 700;
}

.site p {
    margin: 32px 0 0;
    font-size: 24px;
    line-height: 27px;
}
```
